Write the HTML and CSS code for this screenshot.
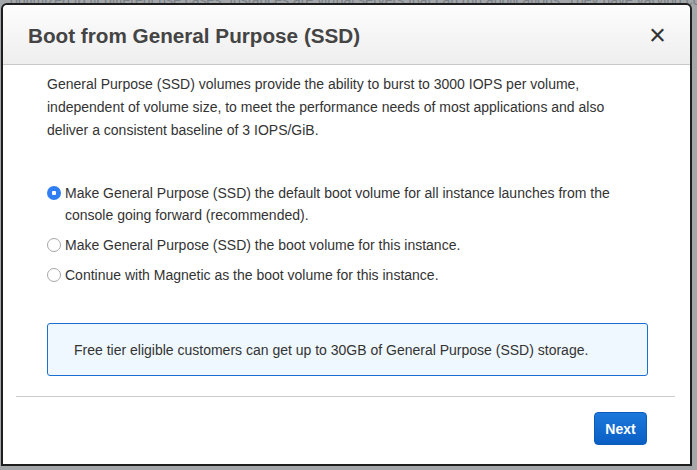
FILE: index.html
```html
<!DOCTYPE html>
<html lang="en">

<head>
    <meta charset="UTF-8">
    <meta name="viewport" content="width=device-width, initial-scale=1.0">
    <title>Boot from General Purpose (SSD)</title>
    <link rel="stylesheet" href="styles.css">
</head>

<body>
    <div class="backdrop">
        <p class="backdrop-text">optimized to fit different use cases. Instances are virtual servers that can run applications. They have varying combinations</p>
        <div class="backdrop-row">
            <span>0</span>
            <span>32</span>
            <span>EBS only</span>
        </div>
    </div>

    <div class="modal">
        <div class="modal-header">
            <h2>Boot from General Purpose (SSD)</h2>
            <span class="close">&times;</span>
        </div>

        <div class="modal-body">
            <p class="intro">General Purpose (SSD) volumes provide the ability to burst to 3000 IOPS per volume,
                independent of volume size, to meet the performance needs of most applications and also
                deliver a consistent baseline of 3 IOPS/GiB.</p>

            <ul class="options">
                <li>
                    <span class="radio checked"></span>
                    <span>Make General Purpose (SSD) the default boot volume for all instance launches from the
                        console going forward (recommended).</span>
                </li>
                <li>
                    <span class="radio"></span>
                    <span>Make General Purpose (SSD) the boot volume for this instance.</span>
                </li>
                <li>
                    <span class="radio"></span>
                    <span>Continue with Magnetic as the boot volume for this instance.</span>
                </li>
            </ul>

            <div class="info-box">Free tier eligible customers can get up to 30GB of General Purpose (SSD) storage.</div>
        </div>

        <div class="modal-footer">
            <button class="next-button">Next</button>
        </div>
    </div>
</body>

</html>
```

FILE: styles.css
```css
body {
    margin: 0;
    font-family: "Liberation Sans", Arial, sans-serif;
    background-color: #a3a7aa;
}

.backdrop {
    height: 470px;
    overflow: hidden;
    display: flex;
    flex-direction: column;
    justify-content: space-between;
    color: #7c8185;
    font-size: 14px;
}

.backdrop-text {
    margin: -8px 0 0 10px;
    white-space: nowrap;
}

.backdrop-row {
    display: flex;
    gap: 240px;
    padding-left: 230px;
    margin-bottom: -10px;
}

.modal {
    position: absolute;
    top: 3px;
    left: 1px;
    width: 687px;
    height: 459px;
    background-color: #fff;
    border: 2px solid #1e1e1e;
    border-radius: 6px 6px 0 0;
    display: flex;
    flex-direction: column;
}

.modal-header {
    height: 59px;
    display: flex;
    align-items: center;
    justify-content: space-between;
    padding: 0 24px 0 25px;
    background: linear-gradient(#fdfdfd, #eeeeee);
    border-bottom: 1px solid #c9c9c9;
    border-radius: 5px 5px 0 0;
}

.modal-header h2 {
    margin: 2px 0 0 0;
    font-size: 20.7px;
    color: #444;
}

.close {
    font-size: 29px;
    color: #333;
    line-height: 1;
    margin-top: 2px;
}

.modal-body {
    padding: 8px 42px 0 44px;
    color: #333;
    font-size: 14px;
}

.intro {
    margin: 0;
    line-height: 23px;
}

.options {
    list-style-type: none;
    padding: 0;
    margin: 40px 0 0 0;
}

.options li {
    display: flex;
    align-items: flex-start;
    gap: 4px;
    line-height: 22px;
    margin-bottom: 8px;
}

.radio {
    flex: none;
    width: 12px;
    height: 12px;
    margin-top: 4px;
    border: 1px solid #a6a6a6;
    border-radius: 50%;
    background-color: #fff;
}

.radio.checked {
    width: 14px;
    height: 14px;
    border: none;
    background: radial-gradient(circle, #fff 0 2px, #2f7ef3 2.5px);
}

.info-box {
    margin-top: 37px;
    height: 51px;
    display: flex;
    align-items: center;
    padding-left: 26px;
    background-color: #eff8fe;
    border: 1px solid #1a6fd1;
    border-radius: 3px;
}

.modal-footer {
    margin: 20px 15px 0 13px;
    padding-top: 15px;
    border-top: 1px solid #cccccc;
    display: flex;
    justify-content: flex-end;
    padding-right: 28px;
}

.next-button {
    width: 53px;
    height: 33px;
    padding: 0;
    font-family: "Liberation Sans", Arial, sans-serif;
    font-size: 14px;
    font-weight: bold;
    color: #fff;
    background: linear-gradient(#1c78dc, #0a5fc4);
    border: 1px solid #0b5bbb;
    border-radius: 4px;
    cursor: pointer;
}
```
